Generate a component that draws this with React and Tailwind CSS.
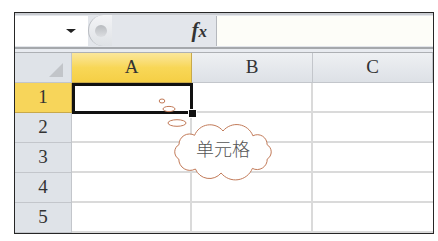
import React from "react";

function cloudPath(cx, cy, rx, ry, n) {
  const pts = [];
  const jitter = [0, 0.15, -0.1, 0.08, -0.12, 0.1, 0, -0.08, 0.12, -0.05, 0.06, -0.1];
  for (let i = 0; i < n; i++) {
    const a = (i / n) * Math.PI * 2 + jitter[i % jitter.length] * 0.4 - Math.PI / 2;
    pts.push([cx + rx * Math.cos(a), cy + ry * Math.sin(a)]);
  }
  let d = `M ${pts[0][0].toFixed(1)} ${pts[0][1].toFixed(1)}`;
  for (let i = 0; i < n; i++) {
    const p = pts[(i + 1) % n];
    const q = pts[i];
    const len = Math.hypot(p[0] - q[0], p[1] - q[1]);
    const r = len * 0.58;
    d += ` A ${r.toFixed(1)} ${r.toFixed(1)} 0 0 1 ${p[0].toFixed(1)} ${p[1].toFixed(1)}`;
  }
  return d + " Z";
}

const font = { fontFamily: '"Liberation Serif", "Noto Sans CJK SC", serif' };

function HeaderCell({ label, w, active }) {
  return (
    <div
      className={`flex items-center justify-center border-r border-b ${
        active
          ? "bg-gradient-to-b from-[#fbe79a] via-[#f8d757] to-[#f5cf45] border-[#c8a94a]"
          : "bg-gradient-to-b from-[#eef0f3] to-[#dde1e6] border-[#c3c6cb]"
      } text-[19px] text-[#333]`}
      style={{ width: w, ...font }}
    >
      {label}
    </div>
  );
}

export default function App() {
  const rows = [1, 2, 3, 4, 5];
  const cols = [
    { l: "A", w: 120 },
    { l: "B", w: 121 },
    { l: "C", w: 120 },
  ];
  return (
    <div className="relative w-[438px] h-[241px] bg-white overflow-hidden">
      <div className="pt-[12px] pl-[14px]">
        <div className="w-[420px] border border-[#262626] bg-white">
          {/* formula bar */}
          <div className="h-[34px] bg-[#e3e6eb] border-t-2 border-[#c9ccd1] flex items-stretch pb-[1px]">
            <div className="w-[73px] bg-white flex items-center justify-end pr-[12px] mt-[1px]">
              <div className="w-0 h-0 border-l-[5px] border-r-[5px] border-t-[4px] border-l-transparent border-r-transparent border-t-[#222]" />
            </div>
            <div className="w-[128px] flex items-center relative">
              <div className="h-full w-[24px] rounded-l-full bg-gradient-to-b from-[#f3f4f6] to-[#dfe2e6] border-l border-[#b9bcc1] flex items-center justify-center">
                <div className="w-[12px] h-[12px] rounded-full bg-gradient-to-b from-[#b8bbbf] to-[#dcdee1]" />
              </div>
              <div className="flex-1" />
              <div
                className="pr-[9px] text-[21px] italic font-bold text-[#333] leading-none"
                style={{ fontFamily: '"Liberation Serif", serif' }}
              >
                f<span className="text-[17px]">x</span>
              </div>
            </div>
            <div className="flex-1 bg-[#fdfdf8] border-l border-[#b5b8bd] mt-[1px]" />
          </div>
          <div className="h-[6px] bg-[#e8ebf0] border-t-2 border-b border-t-[#a5a8ac] border-b-[#adb0b4]" />
          {/* header row */}
          <div className="flex h-[30px]">
            <div className="w-[57px] bg-[#dfe3e8] border-r border-b border-[#c3c6cb] relative">
              <div className="absolute right-[8px] bottom-[5px] w-0 h-0 border-b-[14px] border-l-[14px] border-l-transparent border-b-[#c2c5c9]" />
            </div>
            {cols.map((c) => (
              <HeaderCell key={c.l} label={c.l} w={c.w} active={c.l === "A"} />
            ))}
          </div>
          {rows.map((r) => (
            <div key={r} className="flex h-[30px]">
              <div
                className={`w-[57px] flex items-center justify-center border-r border-b text-[19px] text-[#333] ${
                  r === 1
                    ? "bg-[#f7d55a] border-[#c8a94a]"
                    : "bg-[#dfe3e8] border-[#c3c6cb]"
                }`}
                style={font}
              >
                {r}
              </div>
              {cols.map((c) => (
                <div
                  key={c.l}
                  className="relative border-r-2 border-b-2 border-[#dadada] last:border-r-0"
                  style={{ width: c.w }}
                >
                  {r === 1 && c.l === "A" && (
                    <>
                      <div className="absolute left-0 top-0 w-[121px] h-[31px] border-[3px] border-[#111] z-10" />
                      <div className="absolute left-[116px] top-[26px] w-[9px] h-[9px] bg-[#111] border border-white z-20" />
                    </>
                  )}
                </div>
              ))}
            </div>
          ))}
        </div>
      </div>
      {/* cloud callout */}
      <svg
        className="absolute left-[156px] top-[96px] z-30"
        width="126"
        height="86"
        viewBox="0 0 126 86"
      >
        <ellipse cx="6" cy="5" rx="2.8" ry="2" fill="white" stroke="#c27a58" strokeWidth="1" />
        <ellipse cx="13" cy="13" rx="6" ry="2.6" fill="white" stroke="#c27a58" strokeWidth="1" />
        <ellipse cx="21" cy="27" rx="9" ry="3.3" fill="white" stroke="#c27a58" strokeWidth="1" />
        <path
          d={cloudPath(67, 56, 47, 21, 10)}
          fill="white"
          stroke="#c27a58"
          strokeWidth="1"
        />
        <text
          x="67"
          y="55"
          textAnchor="middle"
          dominantBaseline="middle"
          fontSize="18"
          fontWeight="300"
          fill="#555"
          style={{ fontFamily: '"Noto Sans CJK SC", serif' }}
        >
          单元格
        </text>
      </svg>
    </div>
  );
}
